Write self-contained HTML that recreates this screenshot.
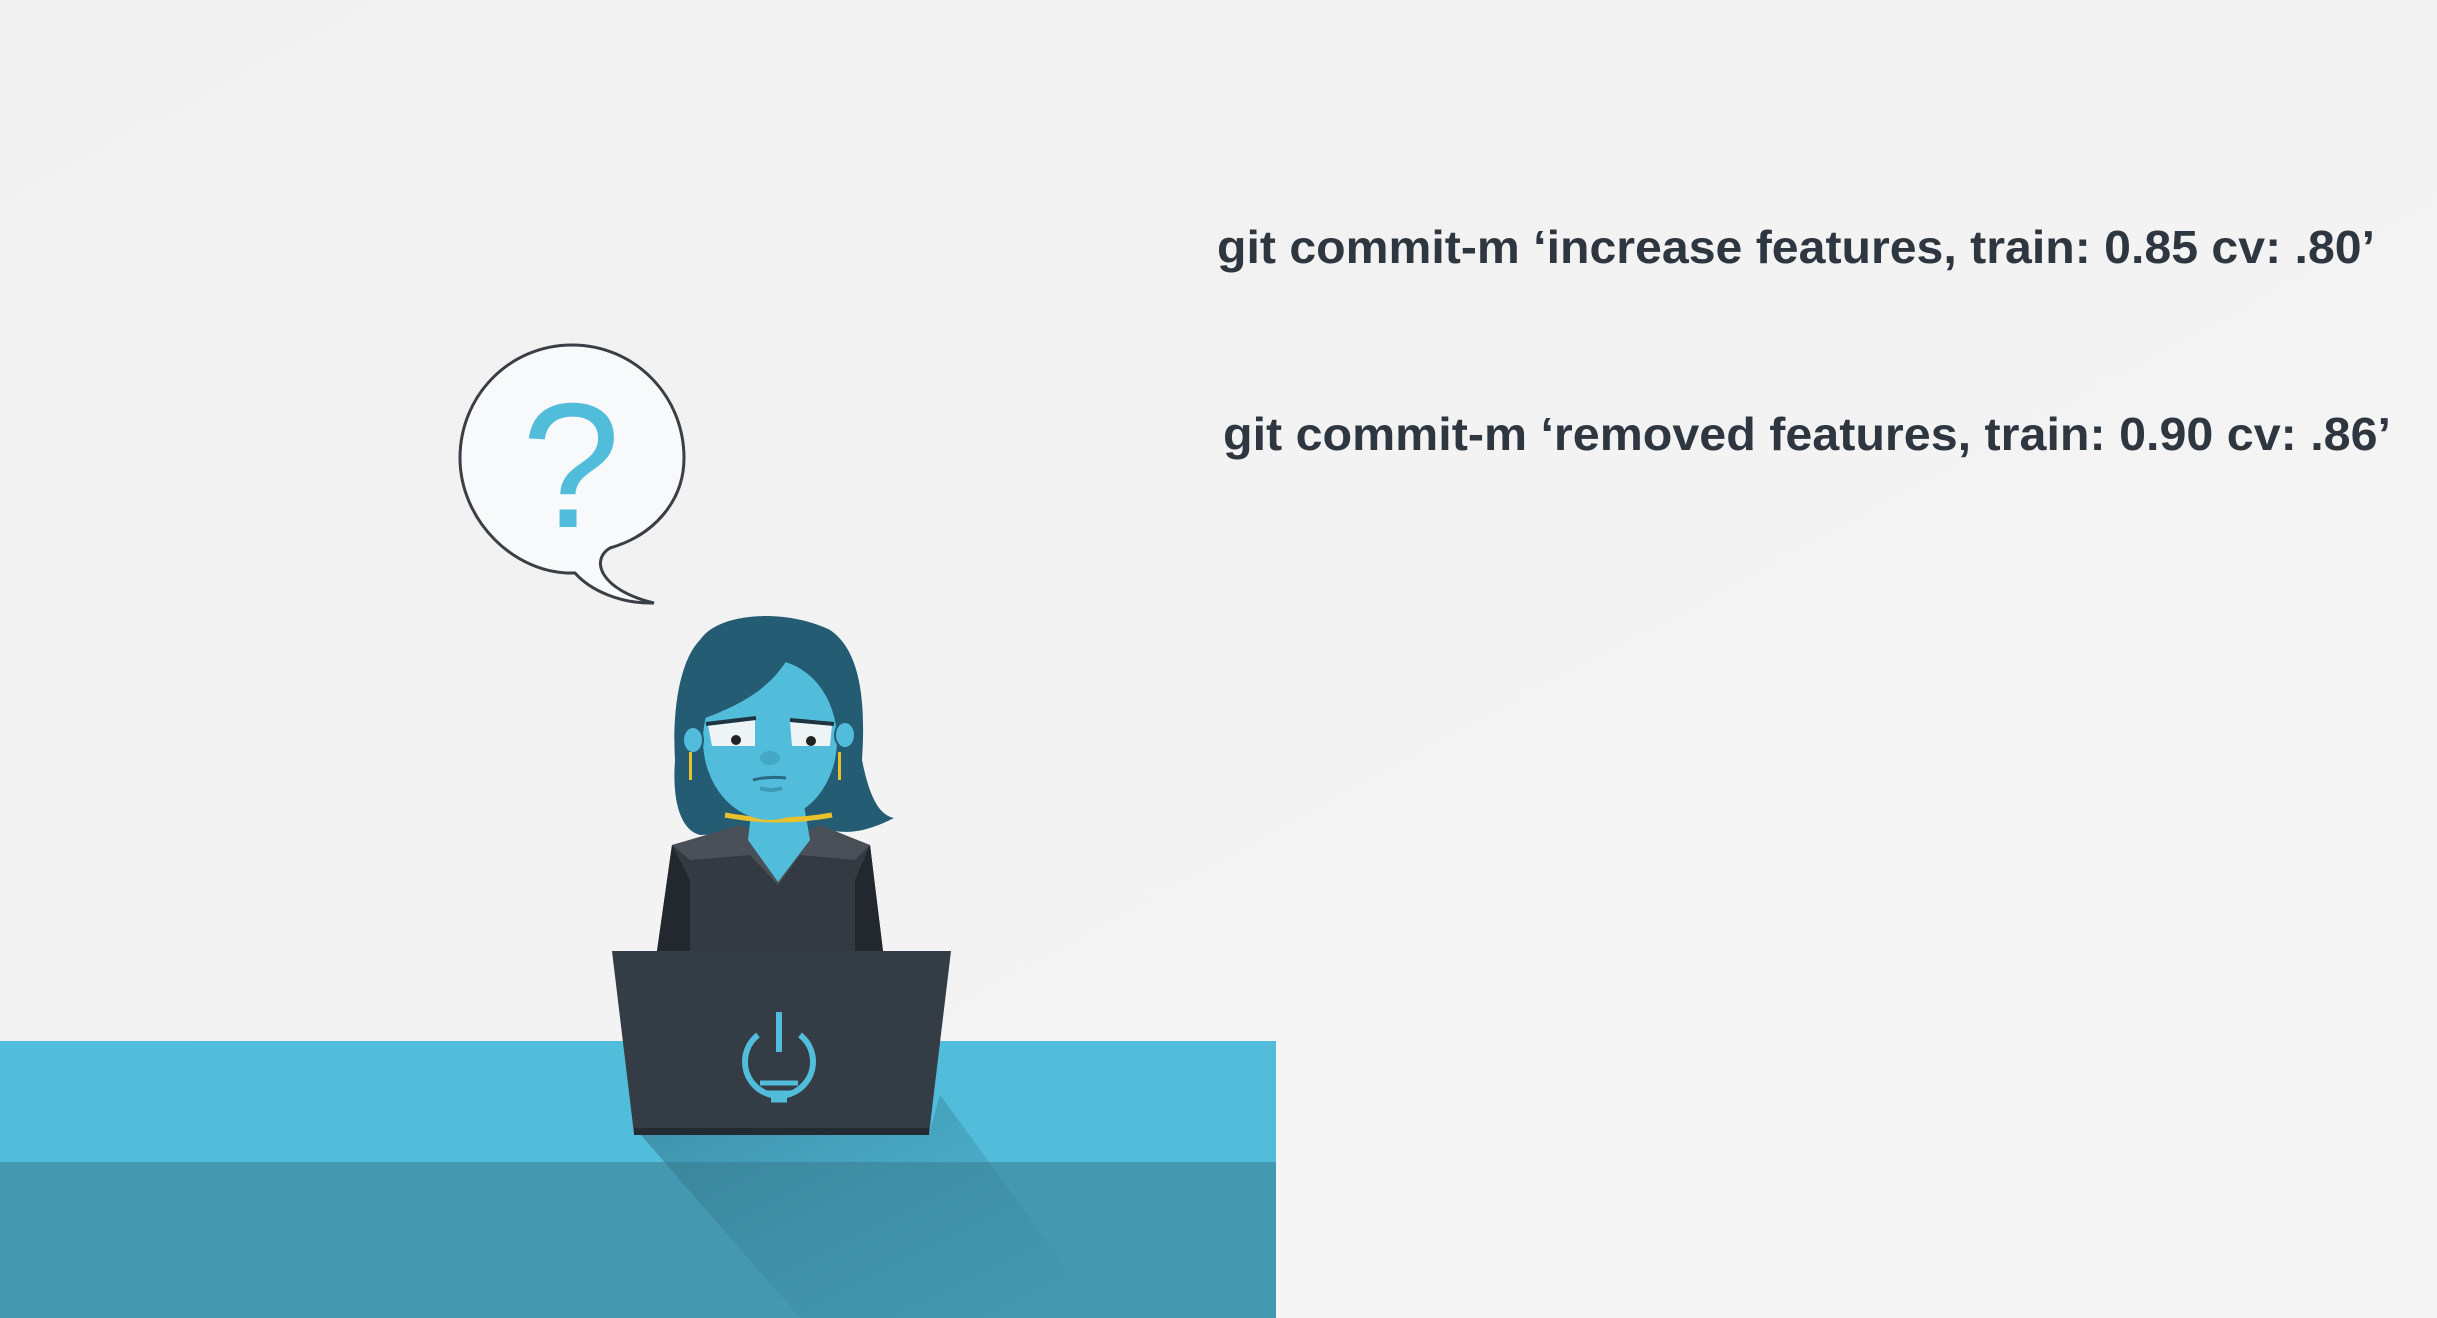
<!DOCTYPE html>
<html><head><meta charset="utf-8"><style>
html,body{margin:0;padding:0;width:2437px;height:1318px;overflow:hidden;background:#f3f3f3;}
svg{display:block}
</style></head><body>
<svg width="2437" height="1318" viewBox="0 0 2437 1318" xmlns="http://www.w3.org/2000/svg">
<defs>
<linearGradient id="bg" x1="0" y1="0" x2="1" y2="1"><stop offset="0" stop-color="#f1f1f1"/><stop offset="1" stop-color="#f5f5f5"/></linearGradient>
<linearGradient id="sh" x1="0" y1="0" x2="1" y2="1"><stop offset="0" stop-color="#2f6f82" stop-opacity="0.6"/><stop offset="1" stop-color="#3a8aa2" stop-opacity="0"/></linearGradient>
</defs>
<rect width="2437" height="1318" fill="url(#bg)"/>
<!-- text -->
<text x="1217" y="263" font-family="'Liberation Sans',sans-serif" font-weight="bold" font-size="46" fill="#2e3640" textLength="1158" lengthAdjust="spacingAndGlyphs">git commit-m ‘increase features, train: 0.85 cv: .80’</text>
<text x="1223" y="450" font-family="'Liberation Sans',sans-serif" font-weight="bold" font-size="46" fill="#2e3640" textLength="1168" lengthAdjust="spacingAndGlyphs">git commit-m ‘removed features, train: 0.90 cv: .86’</text>
<!-- desk -->
<rect x="0" y="1041" width="1276" height="122" fill="#52bcdb"/>
<rect x="0" y="1162" width="1276" height="156" fill="#4498b0"/>
<polygon points="640,1134 929,1134 940,1095 1090,1300 1075,1318 800,1318" fill="url(#sh)"/>
<!-- bubble -->
<path d="M610,548 C590,560 600,590 654,603 C620,604 590,590 575,573 C514,575 460,520 460,458 C460,395 510,345 572,345 C634,345 684,395 684,458 C684,500 655,535 610,548 Z" fill="#f8f9fb" stroke="#3a3f45" stroke-width="3"/>
<text x="571" y="527" text-anchor="middle" font-family="'Liberation Sans',sans-serif" font-size="178" fill="#52bcdb">?</text>
<!-- hair back -->
<path d="M700,640 C720,610 790,610 830,630 C860,650 866,700 862,760 C870,800 880,815 894,818 C870,830 850,835 830,830 L700,835 C680,830 672,800 675,760 C672,710 680,660 700,640 Z" fill="#245c74"/>
<!-- body -->
<path d="M672,845 L740,830 L820,830 L870,845 L883,951 L657,951 Z" fill="#333a42"/>
<path d="M672,845 L657,951 L690,951 L690,880 Z" fill="#22282e"/>
<path d="M870,845 L883,951 L855,951 L855,880 Z" fill="#22282e"/>
<path d="M672,845 L740,825 L778,842 L820,825 L870,845 L855,860 L800,855 L778,885 L750,855 L690,860 Z" fill="#4a5058"/>
<!-- neck -->
<path d="M752,805 L804,805 L810,840 L778,882 L748,840 Z" fill="#52bcdb"/>
<path d="M725,815 Q778,825 832,815" stroke="#e8c12c" stroke-width="5" fill="none"/>
<!-- face -->
<ellipse cx="770" cy="740" rx="67" ry="80" fill="#52bcdb"/>
<ellipse cx="693" cy="740" rx="10" ry="13" fill="#52bcdb" stroke="#245c74" stroke-width="2"/>
<ellipse cx="845" cy="735" rx="10" ry="13" fill="#52bcdb" stroke="#245c74" stroke-width="2"/>
<rect x="689" y="752" width="3" height="28" fill="#e8c12c"/>
<rect x="838" y="752" width="3" height="28" fill="#e8c12c"/>
<path d="M700,700 C700,640 750,625 790,628 C830,630 850,660 850,700 C830,690 800,670 790,655 C770,690 740,705 700,720 Z" fill="#245c74"/>
<path d="M708,725 L755,720 L755,746 L712,746 Z" fill="#eef3f6"/>
<path d="M790,722 L832,725 L830,746 L792,746 Z" fill="#eef3f6"/>
<circle cx="736" cy="740" r="5" fill="#222"/>
<circle cx="811" cy="741" r="5" fill="#222"/>
<path d="M706,724 L756,718 M790,720 L834,724" stroke="#1e3440" stroke-width="4"/>
<ellipse cx="770" cy="758" rx="10" ry="7" fill="#44a8c6"/>
<path d="M753,780 Q768,776 786,778" stroke="#2a6a80" stroke-width="3" fill="none"/>
<path d="M760,788 Q770,792 782,788" stroke="#3e99b6" stroke-width="4" fill="none"/>
<!-- laptop -->
<path d="M612,951 L951,951 L929,1134 L634,1134 Z" fill="#343c45"/>
<rect x="634" y="1128" width="295" height="7" fill="#232a31"/>
<path d="M758,1035 A34,34 0 1 0 800,1035" fill="none" stroke="#52bcdb" stroke-width="6"/>
<line x1="779" y1="1012" x2="779" y2="1052" stroke="#52bcdb" stroke-width="6"/>
<path d="M760,1083 L798,1083 M765,1093 L793,1093 M771,1100 L787,1100" stroke="#52bcdb" stroke-width="5"/>
</svg>
</body></html>
